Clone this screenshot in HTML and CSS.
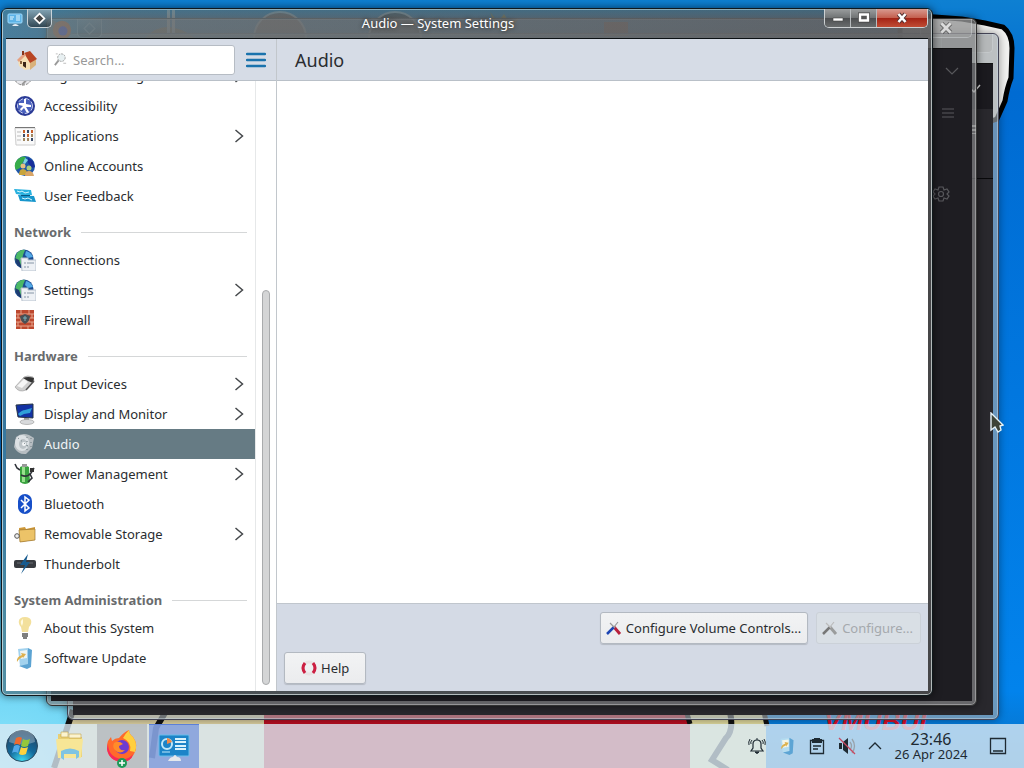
FILE: index.html
```html
<!DOCTYPE html>
<html lang="en">
<head>
    <meta charset="UTF-8">
    <title>Audio — System Settings</title>
    <link rel="stylesheet" href="styles.css">
</head>
<body>
    <div class="desktop">
        <svg class="wallpaper" viewBox="0 0 1024 768" preserveAspectRatio="xMidYMid slice" aria-hidden="true">
            <defs>
                <linearGradient id="sky" x1="0" y1="0" x2="0" y2="1">
                    <stop offset="0" stop-color="#0e80d2"/>
                    <stop offset=".12" stop-color="#006bd2"/>
                    <stop offset=".9" stop-color="#0283ec"/>
                    <stop offset="1" stop-color="#0a70c0"/>
                </linearGradient>
                <radialGradient id="glow" cx="0" cy="1" r=".35">
                    <stop offset="0" stop-color="#8be4fb"/>
                    <stop offset=".5" stop-color="#60cdf2"/>
                    <stop offset="1" stop-color="#60cdf2" stop-opacity="0"/>
                </radialGradient>
            </defs>
            <rect width="1024" height="768" fill="url(#sky)"/>
            <rect width="1024" height="768" fill="url(#glow)"/>
            <path d="M900 15 L935 17 L962 19 L985 23 L1003 27 Q1012 34 1012 48 L1011 78 Q1007 88 1005 101 L997 119 L970 128 L900 128Z" fill="#f2f2f0" stroke="#000" stroke-width="5"/>
            <g>
                <path d="M45 38 L52 20 L62 24 L69 38Z" fill="#c84b10"/>
                <path d="M145 38 q20-22 50 0z" fill="#a06010"/>
                <path d="M167 10h3v24h-3zM172 10h3v24h-3z" fill="#fff"/>
                <circle cx="280" cy="38" r="26" fill="#8a4a30" stroke="#ddd" stroke-width="2"/>
                <circle cx="395" cy="38" r="26" fill="#171010" stroke="#ddd" stroke-width="2"/>
                <path d="M490 12l8 10 6-8 5 8 10-4-8 12h-14z" fill="#c09000"/>
                <path d="M604 22h24v14h-24z" fill="#a03000"/>
            </g>
            <path d="M72 712h195v56H52z" fill="#d9cea0"/>
            <path d="M73 710L54 768" stroke="#111" stroke-width="6"/>
            <path d="M168 708l-12 20-4 30" stroke="#111" stroke-width="6" fill="none"/>
            <path d="M264 712h427v56H264z" fill="#b80e22"/>
            <path d="M690 712h76v56h-76z" fill="#ddd79c"/>
            <path d="M686 710l4 14M764 712l3 14" stroke="#111" stroke-width="5" fill="none"/>
            <path d="M730 712q4 18-4 26l-14 22 16 10" stroke="#111" stroke-width="6" fill="none"/>
            <text x="824" y="730" class="wall-text">VMUBUI</text>
        </svg>

        <section class="window window-far">
            <div class="titlebar"><div class="captions"><span class="cap"></span></div></div>
            <div class="dark-page">
                <svg class="far-marks" viewBox="0 0 40 70">
                    <path d="M17 25l3 3 6-7M14 62h8M14 66h8M14 70h8" stroke="#ddd" fill="none" stroke-width="1.5"/>
                </svg>
                <div class="dark-head"></div>
                <div class="dark-sub"></div>
            </div>
        </section>

        <section class="window window-mid">
            <div class="titlebar">
                <svg class="ghost-icon" viewBox="0 0 24 24"><circle cx="12" cy="12" r="10" fill="#e8601c"/><circle cx="13" cy="13" r="5" fill="#6a3fc0"/></svg>
                <span class="pin"><svg viewBox="0 0 12 12"><path d="M6 1l5 5-5 5-5-5z" fill="none" stroke="#ccc"/></svg></span>
                <div class="captions">
                    <span class="cap ghost-close"><svg viewBox="0 0 12 10"><path d="M2 1l8 8M10 1L2 9" stroke="#444" stroke-width="4"/><path d="M2 1l8 8M10 1L2 9" stroke="#fff" stroke-width="2.400"/></svg></span>
                </div>
            </div>
            <div class="dark-page near">
                <svg viewBox="0 0 44 170">
                    <g fill="none" stroke="#58585c" stroke-width="1.2">
                        <path d="M18 19l6 6 6-6"/>
                        <path d="M14 60h12M14 64h12M14 68h12"/>
                        <circle cx="13" cy="145" r="2.5"/>
                        <path d="M11 138h4l1 3 3-1 2 3-2 2 2 2-2 3-3-1-1 3h-4l-1-3-3 1-2-3 2-2-2-2 2-3 3 1z"/>
                    </g>
                </svg>
            </div>
        </section>

        <main class="window window-main">
            <header class="titlebar">
                <svg class="app-icon" viewBox="0 0 16 16"><rect x="1" y="2" width="14" height="9" rx="1" fill="#5db3e6" stroke="#9fdcff"/><path d="M3 5h4M3 7h3M9 4h4M9 6h4M9 8h4" stroke="#e6f8ff"/><path d="M5 14q3-4 7 0z" fill="#e8eef4"/></svg>
                <button class="pin" type="button" aria-label="Keep above"><svg viewBox="0 0 12 12"><path d="M6 1.500l4.500 4.500L6 10.500 1.500 6z" fill="#444" stroke="#fff" stroke-width="1.600"/></svg></button>
                <h1 class="caption">Audio — System Settings</h1>
                <div class="captions">
                    <button class="cap" type="button" aria-label="Minimize"><svg viewBox="0 0 14 12"><path d="M2 6h10v3H2z" fill="#fff" stroke="#444" stroke-width=".6"/></svg></button>
                    <button class="cap" type="button" aria-label="Maximize"><svg viewBox="0 0 14 12"><path d="M3 2.500h8v6H3z" fill="none" stroke="#444" stroke-width="4"/><path d="M3 2.500h8v6H3z" fill="#555" stroke="#fff" stroke-width="2.400"/></svg></button>
                    <button class="cap close" type="button" aria-label="Close"><svg viewBox="0 0 14 12"><path d="M3.500 2l7 8M10.500 2l-7 8" stroke="#533" stroke-width="4.400"/><path d="M3.500 2l7 8M10.500 2l-7 8" stroke="#fff" stroke-width="2.600"/></svg></button>
                </div>
            </header>

            <div class="client">
                <aside class="sidebar">
                    <div class="toolbar">
                        <button class="tool" type="button" aria-label="Home">
                            <svg viewBox="0 0 22 22"><path d="M2 11l6-6 6 7v8l-5 1-6-4z" fill="#f5dfb4"/><path d="M14 12l6-2v6l-6 5z" fill="#d9b27c"/><path d="M8 4l6-2 7 8-7 4z" fill="#b84524"/><path d="M1 11l7-7 2 2-7 7z" fill="#e6a080"/><path d="M6 2h2v4H6z" fill="#87361c"/><path d="M7 13h3v6l-3-2z" fill="#392518"/><path d="M4 12h2v3H4z" fill="#86603c"/></svg>
                        </button>
                        <label class="search">
                            <svg viewBox="0 0 16 16"><circle cx="9" cy="6" r="4" fill="#e8f0f2" stroke="#999" stroke-dasharray="2 1"/><path d="M6 9l-4 5" stroke="#999" stroke-width="2"/><path d="M11 12h3M3 2h2" stroke="#bbb"/></svg>
                            <input type="text" placeholder="Search..." aria-label="Search">
                        </label>
                        <button class="tool menu" type="button" aria-label="Menu">
                            <svg viewBox="0 0 20 16"><path d="M1 2h18M1 8h18M1 14h18" stroke="#1a73ad" stroke-width="2.400" stroke-linecap="round"/></svg>
                        </button>
                    </div>

                    <div class="scroll-area">
                        <nav class="list">
                            <a class="item" href="#">
                                <svg class="icon" viewBox="0 0 22 22"><circle cx="9" cy="11" r="9" fill="#e8e8ec" stroke="#888" stroke-dasharray="3 1"/><path d="M8 20l12-14" stroke="#999" stroke-width="2"/></svg>
                                <span>Regional Settings</span>
                                <svg class="arrow" viewBox="0 0 10 14"><path d="M1.500 1l7 6-7 6"/></svg>
                            </a>
                            <a class="item" href="#">
                                <svg class="icon" viewBox="0 0 22 22"><circle cx="11" cy="11" r="10" fill="#2b3b96"/><circle cx="11" cy="11" r="7.500" fill="#4a61bd" stroke="#c5cdf0" stroke-dasharray="5 2"/><path d="M10 4h2v5l5 1v2l-5 0 3 5-2 1-3-5-3 3-1-2 3-3-4-1v-2l5 0z" fill="#fff"/></svg>
                                <span>Accessibility</span>
                            </a>
                            <a class="item" href="#">
                                <svg class="icon" viewBox="0 0 22 22"><path d="M1 3h20v17H2z" fill="#fafafa" stroke="#ccc"/><path d="M1 2.500h20" stroke="#777"/><path d="M3 7h4M3 11h4M3 15h4" stroke="#bbb"/><path d="M9 5h2v3H9zM17 5h2v3h-2zM13 9h2v3h-2z" fill="#c8602c"/><path d="M13 5h2v3h-2zM9 9h2v3H9zM17 13h2v3h-2z" fill="#3c4c68"/><path d="M17 9h2v3h-2zM9 13h2v3H9zM13 13h2v3h-2z" fill="#a08660"/></svg>
                                <span>Applications</span>
                                <svg class="arrow" viewBox="0 0 10 14"><path d="M1.500 1l7 6-7 6"/></svg>
                            </a>
                            <a class="item" href="#">
                                <svg class="icon" viewBox="0 0 22 22"><circle cx="11" cy="11" r="10" fill="#1c56a8"/><path d="M3 5q5-5 9-3l-3 5-3 6-4 2q-3-5 1-10z" fill="#38ad4a"/><path d="M14 3l5 3 2 6-3 1-4-5z" fill="#182e9a"/><path d="M11 3l3 2-3 4-2-1z" fill="#7fd6e0"/><circle cx="9" cy="11" r="2.500" fill="#e8bf80"/><path d="M5 20q0-6 4-6t5 6z" fill="#c8a53c"/><circle cx="15" cy="13" r="2.500" fill="#aacb7c"/><path d="M11 21q0-5 4-5t5 5z" fill="#d9a566"/></svg>
                                <span>Online Accounts</span>
                            </a>
                            <a class="item" href="#">
                                <svg class="icon" viewBox="0 0 22 22"><path d="M0 4l17 1 1 5H8L2 9z" fill="#29b1df"/><path d="M4 10l16 1 2 6-16-1z" fill="#1796cc"/><path d="M3 6l3 1 2-1 3 2 4-1M8 13l3 1 3-1 4 2" stroke="#d8f8ff" fill="none"/><path d="M7 10.500h9" stroke="#0a5580"/></svg>
                                <span>User Feedback</span>
                            </a>

                            <h2 class="group">Network</h2>
                            <a class="item" href="#">
                                <svg class="icon" viewBox="0 0 22 22"><circle cx="10" cy="10" r="9.500" fill="#1b4d92"/><path d="M3 4q4-4 8-3l-2 5-1 5 2 7q-7-1-9-8z" fill="#4bb866"/><path d="M1 9l4 2 3 8q-6-2-7-10z" fill="#1d3c70"/><path d="M12 2q5 1 7 6l-5 1-3-3z" fill="#53a9e6"/><path d="M7 9h7v2h8v11H8z" fill="#eef1f5" stroke="#b8c2ce"/><path d="M10 14h2M13 14h7M10 18h2M13 18h2" stroke="#8796a6"/></svg>
                                <span>Connections</span>
                            </a>
                            <a class="item" href="#">
                                <svg class="icon" viewBox="0 0 22 22"><circle cx="10" cy="10" r="9.500" fill="#1b4d92"/><path d="M3 4q4-4 8-3l-2 5-1 5 2 7q-7-1-9-8z" fill="#4bb866"/><path d="M1 9l4 2 3 8q-6-2-7-10z" fill="#1d3c70"/><path d="M12 2q5 1 7 6l-5 1-3-3z" fill="#53a9e6"/><path d="M7 9h7v2h8v11H8z" fill="#eef1f5" stroke="#b8c2ce"/><path d="M10 14h2M13 14h7M10 18h2M13 18h2" stroke="#8796a6"/></svg>
                                <span>Settings</span>
                                <svg class="arrow" viewBox="0 0 10 14"><path d="M1.500 1l7 6-7 6"/></svg>
                            </a>
                            <a class="item" href="#">
                                <svg class="icon" viewBox="0 0 22 22"><path d="M2 1h18v19H2z" fill="#bd482e"/><path d="M2 5h18M2 9h18M2 13h18M2 17h18M7 1v4M15 1v4M4 5v4M18 5v4M7 9v4M15 9v4M4 13v4M18 13v4M7 17v3M14 17v3" stroke="#e6a48c"/><path d="M11 5l5 2q0 5-5 8-5-3-5-8z" fill="#4a5055"/><path d="M11 7v5M9 9h4" stroke="#79b0bd"/></svg>
                                <span>Firewall</span>
                            </a>

                            <h2 class="group">Hardware</h2>
                            <a class="item" href="#">
                                <svg class="icon" viewBox="0 0 22 22"><path d="M1 14L10 4q3-2 9 0l1 4-8 9q-7 3-11-3z" fill="#cfcfcf" stroke="#999" stroke-width=".6"/><path d="M9 5q5-2 11 0l-1 5-5-2z" fill="#333"/><path d="M3 13l7-7 4 3-6 6z" fill="#f5f5f5"/><path d="M12 17l8-9" stroke="#555" stroke-width="1.500"/></svg>
                                <span>Input Devices</span>
                                <svg class="arrow" viewBox="0 0 10 14"><path d="M1.500 1l7 6-7 6"/></svg>
                            </a>
                            <a class="item" href="#">
                                <svg class="icon" viewBox="0 0 22 22"><path d="M2 2l17-1v14l-15-1z" fill="#1332a4" stroke="#263444"/><path d="M4 11q4-4 7-4l7-2-2 5-6 1-4 2z" fill="#30a0d8"/><path d="M10 15h5v3h-5z" fill="#999"/><ellipse cx="13" cy="19" rx="7" ry="2.500" fill="#d8dadc" stroke="#999" stroke-width=".6"/></svg>
                                <span>Display and Monitor</span>
                                <svg class="arrow" viewBox="0 0 10 14"><path d="M1.500 1l7 6-7 6"/></svg>
                            </a>
                            <a class="item selected" href="#" aria-current="page">
                                <svg class="icon" viewBox="0 0 22 22"><path d="M2 4q6-5 13-2l5 3-2 10-6 6q-8 1-12-7z" fill="#b7bec2"/><ellipse cx="8" cy="10" rx="7" ry="8" fill="#dce1e4"/><ellipse cx="9" cy="11" rx="4" ry="5" fill="#bcc3c7"/><circle cx="10" cy="11" r="2" fill="#f3f5f6"/><path d="M4 5l12 10M13 4v14M17 5v9" stroke="#6d7a80" stroke-dasharray="1 3"/></svg>
                                <span>Audio</span>
                            </a>
                            <a class="item" href="#">
                                <svg class="icon" viewBox="0 0 22 22"><path d="M6 4q5-3 9 0l1 15q-5 4-10 0z" fill="#3aa340"/><path d="M8 4h3v15H8z" fill="#98e08c"/><path d="M8 1h5v3H8z" fill="#999"/><path d="M1 1l2 4 3 2M7 12q6 3 10-2l3-5M16 11l2 4-4 4" stroke="#30343a" stroke-width="1.600" fill="none"/><path d="M16 5h4v4h-4z" fill="#333"/></svg>
                                <span>Power Management</span>
                                <svg class="arrow" viewBox="0 0 10 14"><path d="M1.500 1l7 6-7 6"/></svg>
                            </a>
                            <a class="item" href="#">
                                <svg class="icon" viewBox="0 0 22 22"><rect x="4" y="1" width="14" height="20" rx="7" fill="#174fc8"/><path d="M7 7l8 8-4 3V4l4 3-8 8" fill="none" stroke="#fff" stroke-width="1.500"/></svg>
                                <span>Bluetooth</span>
                            </a>
                            <a class="item" href="#">
                                <svg class="icon" viewBox="0 0 22 22"><path d="M5 5l6-1 1 2 9-2v13l-15 2z" fill="#d09938"/><path d="M5 7l16-1v11l-15 2z" fill="#ecc368" stroke="#9e752e" stroke-width=".7"/><circle cx="3" cy="13" r="2.300" fill="#eee" stroke="#555"/></svg>
                                <span>Removable Storage</span>
                                <svg class="arrow" viewBox="0 0 10 14"><path d="M1.500 1l7 6-7 6"/></svg>
                            </a>
                            <a class="item" href="#">
                                <svg class="icon" viewBox="0 0 22 22"><rect x="0" y="7" width="22" height="8" rx="2" fill="#383b40"/><path d="M3 10h4M15 10h4" stroke="#686c72"/><path d="M14 1L6 12h5l-4 9 9-12h-4l2-8z" fill="#175b8f"/></svg>
                                <span>Thunderbolt</span>
                            </a>

                            <h2 class="group">System Administration</h2>
                            <a class="item" href="#">
                                <svg class="icon" viewBox="0 0 22 22"><path d="M11 0c-8 0-7 7-4 10l1 5h6l1-5c4-4 3-10-4-10z" fill="#f3e09c"/><path d="M9 2q-4 2-1 7l1-3z" fill="#fffae0"/><path d="M8 17h6M8 19h6M9 21h4" stroke="#555" stroke-width="1.500"/></svg>
                                <span>About this System</span>
                            </a>
                            <a class="item" href="#">
                                <svg class="icon" viewBox="0 0 22 22"><path d="M4 2l10-1v17l-8 1z" fill="#a2d2ee"/><path d="M14 1l4 2-1 17-4 2-8-3 9-2z" fill="#5ba3d2"/><path d="M6 4l7-1v8l-6 1z" fill="#eef4f0"/><path d="M3 15q-1-5 5-7l-1-2 5 1-3 4v-1q-4 1-6 5z" fill="#ddb04c"/></svg>
                                <span>Software Update</span>
                            </a>
                        </nav>
                        <div class="scrollbar"><div class="thumb"></div></div>
                    </div>
                </aside>

                <section class="page">
                    <div class="toolbar"><h2 class="page-title">Audio</h2></div>
                    <div class="page-body"></div>
                    <footer class="page-footer">
                        <div class="row end">
                            <button class="btn" type="button">
                                <svg viewBox="0 0 16 16"><path d="M8 7l6 7" stroke="#b8203c" stroke-width="3"/><path d="M8 7l-7 7" stroke="#1d46b4" stroke-width="2.500"/><path d="M4 3l5 5M12 2L8 7" stroke="#999" stroke-width="1.200"/></svg>
                                Configure Volume Controls...
                            </button>
                            <button class="btn" type="button" disabled>
                                <svg viewBox="0 0 16 16"><path d="M8 7l6 7" stroke="#9a9c9c" stroke-width="3"/><path d="M8 7l-7 7" stroke="#777" stroke-width="2.500"/><path d="M4 3l5 5M12 2L8 7" stroke="#bbb" stroke-width="1.200"/></svg>
                                Configure...
                            </button>
                        </div>
                        <div class="row">
                            <button class="btn help" type="button">
                                <svg viewBox="0 0 16 16"><circle cx="8" cy="8" r="6" fill="none" stroke="#e8e3e4" stroke-width="3"/><path d="M4 3q-4 5 0 10M12 3q4 5 0 10" fill="none" stroke="#cc1f42" stroke-width="3"/></svg>
                                Help
                            </button>
                        </div>
                    </footer>
                </section>
            </div>
        </main>

        <svg class="pointer" viewBox="0 0 14 22" aria-hidden="true"><path d="M1 1v17l4-3 3 5 3-2-1-4 3-1z" fill="#3e4437" stroke="#e8f4f8" stroke-width="1.400"/></svg>

        <footer class="taskbar">
            <button class="task start" type="button" aria-label="Start">
                <svg viewBox="0 0 34 34">
                    <defs><radialGradient id="orb" cx=".5" cy="1" r=".9"><stop offset="0" stop-color="#3fe0f5"/><stop offset=".5" stop-color="#136b9d"/><stop offset="1" stop-color="#20486a"/></radialGradient></defs>
                    <circle cx="17" cy="17" r="15.500" fill="url(#orb)" stroke="#2c4a60"/>
                    <path d="M4 13a13 13 0 0 1 26 0q-13 5-26 0z" fill="#fff" opacity=".3"/>
                    <path d="M11 9q4-2 6 0l-2 7q-3-2-6 0z" fill="#ee6a2e"/>
                    <path d="M18 10q3 2 7 0l-2 7q-4 2-7 0z" fill="#94c83c"/>
                    <path d="M9 17q3-2 6 0l-2 7q-3-2-6 0z" fill="#52a8e8"/>
                    <path d="M16 18q3 2 7 0l-2 7q-4 2-7 0z" fill="#fcd23e"/>
                </svg>
            </button>
            <button class="task" type="button" aria-label="Files">
                <svg viewBox="0 0 34 34"><path d="M5 5h8l2 3h14v20H5z" fill="#e8cf74"/><path d="M8 3h7v5H8zM16 5h12v4H16z" fill="#fbf3cf" stroke="#c5a44c" stroke-width=".6"/><path d="M3 10h27l-2 19H5z" fill="#f7e696"/><path d="M8 22q9-5 18 0v6l-3 2v-5H11v6l-3-2z" fill="#7fc4e2"/></svg>
            </button>
            <button class="task running" type="button" aria-label="Firefox">
                <svg viewBox="0 0 34 34"><path d="M17 33C4 32 0 22 3 12l3-4 1 4q3-3 7-3 5-6 10-8 0 4 4 7 6 8 1 17-4 8-12 8z" fill="#ff6a2b"/><path d="M24 1q0 4 4 7 5 7 2 15l-5-1q2-9-7-13 3-5 6-8z" fill="#ffcf3e"/><path d="M3 14q0 14 13 16 8 1 12-5-2 8-11 8Q4 32 2 20z" fill="#f5295c"/><circle cx="17" cy="18" r="7" fill="#6d3bd0"/><path d="M9 14q5-3 9 1l-4 2q0 5 6 4-5 5-10 0-3-3-1-7z" fill="#ff8c2a"/><circle cx="17" cy="34" r="5" fill="#1d9a58"/><path d="M17 31v6M14 34h6" stroke="#fff" stroke-width="1.500"/></svg>
            </button>
            <button class="task active" type="button" aria-label="System Settings">
                <svg viewBox="0 0 34 34"><rect x="2" y="5" width="30" height="21" rx="1" fill="#1c84c8" stroke="#69bdea"/><circle cx="10" cy="14" r="5" fill="none" stroke="#bfe8fa" stroke-width="2"/><path d="M10 14V8a6 6 0 0 1 5 4z" fill="#f08a4a"/><path d="M18 9h11M18 12h11M18 16h11M18 19h11" stroke="#d8f2fc" stroke-width="2"/><path d="M5 22h8" stroke="#bfe8fa"/><path d="M11 31q2-4 5-4 2-4 4 0 4 0 4 4z" fill="#e4e8ec"/></svg>
            </button>

            <div class="tray">
                <button class="tray-btn" type="button" aria-label="Notifications"><svg viewBox="0 0 18 18"><path d="M3 14h12l-2-3V7q0-4-4-4T5 7v4z" fill="none" stroke="#1e2a32" stroke-width="1.200"/><path d="M7 15h4q-2 3-4 0M9 1v2" fill="#1e2a32" stroke="#1e2a32"/><path d="M2 2Q0 5 1 8M4 3Q2 5 3 7M16 2q2 3 1 6M14 3q2 2 1 4" fill="none" stroke="#1e2a32"/></svg></button>
                <button class="tray-btn" type="button" aria-label="Updates"><svg viewBox="0 0 22 22"><path d="M3 2l11-1v17l-8 1z" fill="#b4dcf0"/><path d="M14 1l5 3-1 16-4 2-8-3 8-2z" fill="#5ca4d4"/><path d="M5 4l8-1v9l-7 1z" fill="#f5f5e8"/><path d="M4 15q-1-5 5-7l-1-2 5 1-3 5v-2q-4 1-6 5z" fill="#ddb04c"/></svg></button>
                <button class="tray-btn" type="button" aria-label="Clipboard"><svg viewBox="0 0 18 18"><path d="M2.500 3.500h13v13h-13z" fill="none" stroke="#1e2a32" stroke-width="1.300"/><path d="M4 2h2V1h6v1h2v4H4z" fill="#1e2a32"/><path d="M5 9h8M5 12h5" stroke="#1e2a32" stroke-width="1.300"/></svg></button>
                <button class="tray-btn" type="button" aria-label="Volume muted"><svg viewBox="0 0 18 18"><path d="M1 6h3v6H1zM5 5l5-4v16l-5-4z" fill="#1e2a32"/><path d="M12 5q3 4 0 8M14 2q5 7 0 14" fill="none" stroke="#98a2aa" stroke-width="1.300"/><path d="M1 1l16 16" stroke="#c84860" stroke-width="1.300"/></svg></button>
                <button class="tray-btn narrow" type="button" aria-label="Show hidden icons"><svg viewBox="0 0 18 18"><path d="M3 12l6-6 6 6" fill="none" stroke="#1e2a32" stroke-width="1.300"/></svg></button>
                <div class="clock"><time class="hour">23:46</time><time class="date">26 Apr 2024</time></div>
                <button class="tray-btn wide" type="button" aria-label="Show desktop"><svg viewBox="0 0 18 18"><path d="M1.500 1.500h15v15h-15zM4 14h10" fill="none" stroke="#1e2a32" stroke-width="1.300"/></svg></button>
            </div>
        </footer>
    </div>
</body>
</html>
```

FILE: styles.css
```css
* {
    box-sizing: border-box;
}
body {
    margin: 0;
    font-family: "Noto Sans", "Open Sans", sans-serif;
    font-size: 13px;
    line-height: 18px;
    color: #2a2d30;
}
button {
    font: inherit;
    color: inherit;
    padding: 0;
    border: none;
    background: none;
}
h1, h2 {
    margin: 0;
    font-size: 13px;
    font-weight: normal;
}
svg {
    display: block;
    flex-shrink: 0;
}
.desktop {
    position: relative;
    height: 100vh;
    overflow: hidden;
    display: flex;
    flex-direction: column;
    justify-content: flex-end;
}
.wallpaper {
    position: absolute;
    inset: 0;
    width: 100%;
    height: 100%;
}
.wall-text {
    font: italic bold 26px "Liberation Sans", sans-serif;
    fill: #d8102a;
}

/* windows */
.window {
    position: absolute;
    display: flex;
    flex-direction: column;
    padding: 0 4px 4px;
    border: 1px solid #10181c;
    border-radius: 6px;
    box-shadow: inset 0 0 0 1px rgba(225, 235, 235, 0.7), 0 0 8px rgba(0, 0, 0, 0.6);
}
.window-main {
    inset: 8px 91px 72px 1px;
    background: linear-gradient(90deg, rgba(72, 120, 138, 0.75), rgba(88, 98, 102, 0.78) 12%, rgba(78, 78, 80, 0.84));
}
.window-main .titlebar {
    margin: 0 -3px;
    padding: 0 3px;
    background: linear-gradient(rgba(60, 130, 160, 0.35), rgba(160, 160, 160, 0.16) 10px);
}
.window-mid {
    inset: 18px 47px 62px 46px;
    background: rgba(132, 134, 136, 0.68);
    border-color: #333;
    box-shadow: inset 0 0 0 1px rgba(200, 200, 200, 0.5), 0 0 8px rgba(0, 0, 0, 0.6);
}
.window-far {
    inset: 33px 25px 48px 67px;
    padding: 0 5px 4px;
    background: rgba(160, 165, 170, 0.66);
    border-color: #445;
    box-shadow: inset 0 0 0 1px rgba(200, 215, 230, 0.5), 0 0 8px rgba(0, 0, 0, 0.4);
}
.titlebar {
    display: flex;
    align-items: flex-start;
    height: 29px;
    flex-shrink: 0;
}
.app-icon {
    width: 16px;
    height: 16px;
    margin: 3px 4px 0 1px;
}
.pin {
    width: 25px;
    height: 19px;
    display: flex;
    align-items: center;
    justify-content: center;
    border: 1px solid #c9d3d8;
    border-top: none;
    border-radius: 0 0 5px 5px;
    background: linear-gradient(rgba(200, 210, 215, 0.5), rgba(30, 40, 45, 0.6));
}
.pin svg {
    width: 13px;
    height: 13px;
}
.ghost-icon {
    width: 22px;
    height: 22px;
}
.window-mid .pin {
    margin-left: 4px;
    opacity: 0.5;
}
.caption {
    flex: 1;
    text-align: center;
    line-height: 29px;
    color: #fff;
    text-shadow: 0 0 4px #222;
}
.captions {
    display: flex;
    height: 19px;
    margin-left: auto;
    border: 1px solid #ccd0d2;
    border-top: none;
    border-radius: 0 0 5px 5px;
    overflow: hidden;
}
.cap {
    width: 26px;
    display: flex;
    align-items: center;
    justify-content: center;
    border-right: 1px solid #b8bcbe;
    background: linear-gradient(#9a9d9e, #717475 48%, #4c4e50 50%, #696c6d);
}
.cap svg {
    width: 14px;
    height: 12px;
}
.cap.close {
    width: 50px;
    border-right: none;
    background: linear-gradient(#d89a90, #c4604f 48%, #a32214 50%, #c04c34);
}
.window-mid .captions,
.window-far .captions {
    opacity: 0.6;
}
.window-mid .cap,
.window-far .cap {
    width: 50px;
    border: none;
    background: rgba(170, 170, 170, 0.6);
}
.dark-page {
    flex: 1;
    display: flex;
    flex-direction: column;
    background: #29282d;
    border-top: 1px solid #111;
}
.dark-page.near {
    align-items: flex-end;
    background: #1e1d22;
}
.dark-page.near svg {
    width: 44px;
    height: 170px;
}
.dark-head {
    height: 45px;
    background: #1b1a1f;
}
.dark-sub {
    height: 70px;
    border-bottom: 1px solid #09090b;
}
.far-marks {
    position: absolute;
    right: 4px;
    top: 30px;
    width: 40px;
    height: 70px;
}

/* settings window */
.client {
    flex: 1;
    min-height: 0;
    display: flex;
    border-top: 1px solid #0c1114;
    background: #fff;
}
.sidebar {
    width: 270px;
    display: flex;
    flex-direction: column;
}
.toolbar {
    display: flex;
    align-items: center;
    height: 42px;
    flex-shrink: 0;
    background: #d6dce6;
    border-bottom: 1px solid #b9c0c8;
}
.tool {
    display: flex;
    justify-content: center;
    width: 41px;
    flex-shrink: 0;
}
.tool svg {
    width: 22px;
    height: 22px;
}
.tool.menu svg {
    width: 20px;
    height: 16px;
}
.search {
    flex: 1;
    min-width: 0;
    display: flex;
    align-items: center;
    gap: 5px;
    height: 30px;
    padding: 0 5px;
    background: #fff;
    border: 1px solid #b6bcc4;
    border-radius: 3px;
}
.search svg {
    width: 15px;
    height: 15px;
}
.search input {
    flex: 1;
    min-width: 0;
    padding: 0;
    border: none;
    outline: none;
    background: none;
    font: inherit;
}
.search input::placeholder {
    color: #999;
}
.scroll-area {
    flex: 1;
    min-height: 0;
    display: flex;
}
.list {
    flex: 1;
    display: flex;
    flex-direction: column;
    justify-content: flex-end;
    padding-bottom: 18px;
    overflow: hidden;
}
.item {
    display: flex;
    align-items: center;
    gap: 8px;
    height: 30px;
    flex-shrink: 0;
    padding: 0 11px 0 8px;
    color: inherit;
    text-decoration: none;
}
.item.selected {
    background: #667b84;
    color: #f0f4f6;
}
.icon {
    width: 22px;
    height: 22px;
}
.arrow {
    width: 10px;
    height: 14px;
    margin-left: auto;
    fill: none;
    stroke: #45484b;
    stroke-width: 1.5;
}
.group {
    display: flex;
    align-items: center;
    gap: 10px;
    height: 34px;
    flex-shrink: 0;
    padding: 8px 8px 0;
    font-weight: bold;
    color: #696b6d;
}
.group::after {
    content: "";
    flex: 1;
    height: 1px;
    background: #d5d7d8;
}
.scrollbar {
    display: flex;
    align-items: flex-end;
    width: 21px;
    padding: 6px;
    border-left: 1px solid #e6e8e9;
}
.thumb {
    width: 8px;
    height: 66%;
    border: 1px solid #a9abad;
    border-radius: 4px;
    background: #d4d5d6;
}
.page {
    flex: 1;
    display: flex;
    flex-direction: column;
    border-left: 1px solid #c2c7cc;
}
.page-title {
    padding-left: 18px;
    font-size: 18px;
    line-height: 24px;
}
.page-body {
    flex: 1;
}
.page-footer {
    display: flex;
    flex-direction: column;
    gap: 8px;
    padding: 8px 7px 7px;
    background: #d4dae5;
    border-top: 1px solid #c0c6cd;
}
.row {
    display: flex;
    gap: 8px;
}
.row.end {
    justify-content: flex-end;
}
.btn {
    display: flex;
    align-items: center;
    gap: 4px;
    height: 32px;
    padding: 0 6px 0 5px;
    border: 1px solid #b3b9c1;
    border-radius: 3px;
    background: linear-gradient(#f2f3f4, #ebecee);
    box-shadow: 0 1px 1px rgba(0, 0, 0, 0.15);
}
.btn svg {
    width: 16px;
    height: 16px;
}
.btn:disabled {
    padding-right: 7px;
    color: #a5a9ad;
    background: #d9dfe5;
    border-color: #cbd1d8;
    box-shadow: none;
}
.btn.help {
    padding: 0 16px;
}
.pointer {
    position: absolute;
    left: 990px;
    top: 412px;
    width: 14px;
    height: 22px;
}

/* panel */
.taskbar {
    position: relative;
    display: flex;
    height: 44px;
    background: rgba(218, 233, 242, 0.8);
}
.task {
    display: flex;
    align-items: center;
    justify-content: center;
    width: 50px;
    margin-right: 2px;
}
.task svg {
    width: 34px;
    height: 34px;
    overflow: visible;
}
.task.start {
    width: 43px;
}
.task.running {
    background: rgba(150, 150, 160, 0.45);
}
.task.active {
    background: rgba(70, 110, 215, 0.5);
    border-top: 1px solid #5c80d8;
}
.tray {
    display: flex;
    align-items: center;
    margin-left: auto;
    padding-right: 2px;
    color: #1e2a32;
}
.tray-btn {
    display: flex;
    justify-content: center;
    width: 30px;
}
.tray-btn.narrow {
    width: 26px;
}
.tray-btn.wide {
    width: 48px;
}
.tray-btn svg {
    width: 18px;
    height: 18px;
}
.clock {
    display: flex;
    flex-direction: column;
    align-items: center;
    width: 86px;
}
.hour {
    font-size: 16px;
    line-height: 16px;
}
.date {
    line-height: 14px;
}
```
